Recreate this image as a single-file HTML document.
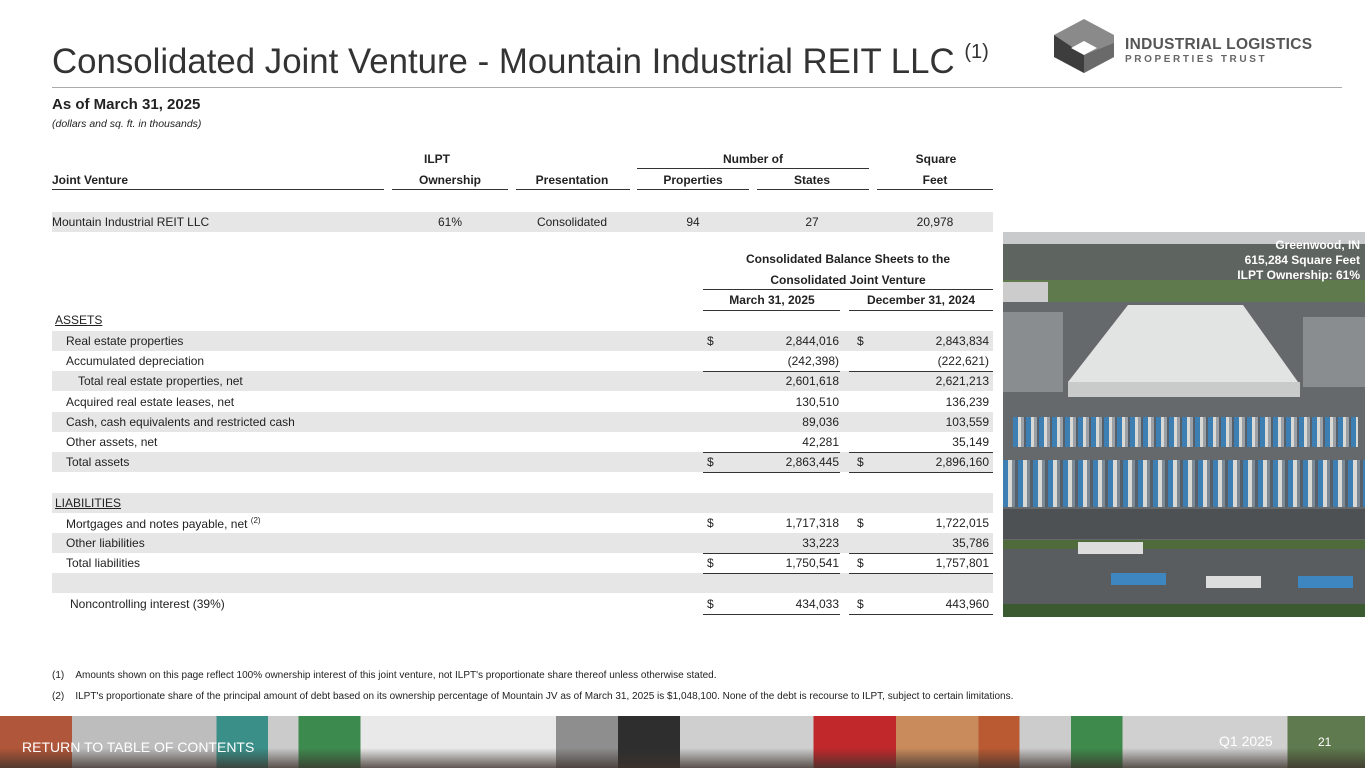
<!DOCTYPE html>
<html><head><meta charset="utf-8"><style>
*{margin:0;padding:0;box-sizing:border-box}
body{width:1365px;height:768px;overflow:hidden;background:#fff;font-family:"Liberation Sans",sans-serif;color:#222;position:relative}
.a{position:absolute;white-space:nowrap}
.t{font-size:12px}
.b{font-weight:bold}
.c{transform:translateX(-50%)}
.v1{position:absolute;right:526px;font-size:12px;text-align:right}
.v2{position:absolute;right:376px;font-size:12px;text-align:right}
.g{background:#e6e6e6;position:absolute;left:52px;width:941px;height:20px}
.ln{position:absolute;height:1px;background:#333}
</style></head><body>
<div class="a" style="left:52px;top:41px;font-size:34.8px;color:#333">Consolidated Joint Venture - Mountain Industrial REIT LLC <sup style="font-size:20px;vertical-align:15px">(1)</sup></div>
<div class="ln" style="left:52px;top:87px;width:1290px;background:#aaa"></div>
<svg class="a" style="left:1054px;top:19px" width="60" height="54" viewBox="0 0 60 54"><polygon points="30,0 60,16 60,38 30,54 0,38 0,16" fill="#8a8a8a"/><polygon points="0,16 0,38 30,54 30,36" fill="#3d3d3d"/><polygon points="30,36 30,54 60,38 60,24" fill="#6a6a6a"/><polygon points="30,22 43,29 30,36 17,29" fill="#fff"/></svg>
<div class="a b" style="left:1125px;top:36px;font-size:15.5px;color:#555;letter-spacing:.3px">INDUSTRIAL LOGISTICS</div>
<div class="a b" style="left:1125px;top:54px;font-size:10px;color:#666;letter-spacing:2.6px">PROPERTIES TRUST</div>
<div class="a b" style="left:52px;top:96px;font-size:15px">As of March 31, 2025</div>
<div class="a" style="left:52px;top:118px;font-size:10.5px;font-style:italic">(dollars and sq. ft. in thousands)</div>

<div class="a t b c" style="left:437px;top:152px">ILPT</div>
<div class="a t b c" style="left:753px;top:152px">Number of</div>
<div class="ln" style="left:637px;top:168px;width:232px"></div>
<div class="a t b c" style="left:936px;top:152px">Square</div>
<div class="a t b" style="left:52px;top:173px">Joint Venture</div>
<div class="a t b c" style="left:450px;top:173px">Ownership</div>
<div class="a t b c" style="left:572px;top:173px">Presentation</div>
<div class="a t b c" style="left:693px;top:173px">Properties</div>
<div class="a t b c" style="left:812px;top:173px">States</div>
<div class="a t b c" style="left:935px;top:173px">Feet</div>
<div class="ln" style="left:52px;top:189px;width:332px"></div>
<div class="ln" style="left:392px;top:189px;width:116px"></div>
<div class="ln" style="left:516px;top:189px;width:114px"></div>
<div class="ln" style="left:637px;top:189px;width:112px"></div>
<div class="ln" style="left:757px;top:189px;width:112px"></div>
<div class="ln" style="left:877px;top:189px;width:116px"></div>
<div class="g" style="top:212px"></div>
<div class="a t" style="left:52px;top:215px">Mountain Industrial REIT LLC</div>
<div class="a t c" style="left:450px;top:215px">61%</div>
<div class="a t c" style="left:572px;top:215px">Consolidated</div>
<div class="a t c" style="left:693px;top:215px">94</div>
<div class="a t c" style="left:812px;top:215px">27</div>
<div class="a t c" style="left:935px;top:215px">20,978</div>

<div class="a t b c" style="left:848px;top:252px">Consolidated Balance Sheets to the</div>
<div class="a t b c" style="left:848px;top:273px">Consolidated Joint Venture</div>
<div class="ln" style="left:703px;top:289px;width:290px"></div>
<div class="a t b c" style="left:772px;top:293px">March 31, 2025</div>
<div class="a t b c" style="left:921px;top:293px">December 31, 2024</div>
<div class="ln" style="left:703px;top:310px;width:137px"></div>
<div class="ln" style="left:849px;top:310px;width:144px"></div>

<div class="g" style="top:331px"></div><div class="g" style="top:371px"></div><div class="g" style="top:412px"></div><div class="g" style="top:452px"></div><div class="g" style="top:493px"></div><div class="g" style="top:533px"></div><div class="g" style="top:573px"></div>

<div class="a t" style="left:55px;top:313px;text-decoration:underline">ASSETS</div>
<div class="a t" style="left:66px;top:334px">Real estate properties</div>
<div class="a t" style="left:66px;top:354px">Accumulated depreciation</div>
<div class="a t" style="left:78px;top:374px">Total real estate properties, net</div>
<div class="a t" style="left:66px;top:395px">Acquired real estate leases, net</div>
<div class="a t" style="left:66px;top:415px">Cash, cash equivalents and restricted cash</div>
<div class="a t" style="left:66px;top:435px">Other assets, net</div>
<div class="a t" style="left:66px;top:455px">Total assets</div>
<div class="a t" style="left:55px;top:496px;text-decoration:underline">LIABILITIES</div>
<div class="a t" style="left:66px;top:516px">Mortgages and notes payable, net <sup style="font-size:8px">(2)</sup></div>
<div class="a t" style="left:66px;top:536px">Other liabilities</div>
<div class="a t" style="left:66px;top:556px">Total liabilities</div>
<div class="a t" style="left:70px;top:597px">Noncontrolling interest (39%)</div>

<div class="a t" style="left:707px;top:334px">$</div><div class="a t" style="left:857px;top:334px">$</div>
<div class="a t" style="left:707px;top:455px">$</div><div class="a t" style="left:857px;top:455px">$</div>
<div class="a t" style="left:707px;top:516px">$</div><div class="a t" style="left:857px;top:516px">$</div>
<div class="a t" style="left:707px;top:556px">$</div><div class="a t" style="left:857px;top:556px">$</div>
<div class="a t" style="left:707px;top:597px">$</div><div class="a t" style="left:857px;top:597px">$</div>

<div class="v1" style="top:334px">2,844,016</div><div class="v2" style="top:334px">2,843,834</div>
<div class="v1" style="top:354px">(242,398)</div><div class="v2" style="top:354px">(222,621)</div>
<div class="v1" style="top:374px">2,601,618</div><div class="v2" style="top:374px">2,621,213</div>
<div class="v1" style="top:395px">130,510</div><div class="v2" style="top:395px">136,239</div>
<div class="v1" style="top:415px">89,036</div><div class="v2" style="top:415px">103,559</div>
<div class="v1" style="top:435px">42,281</div><div class="v2" style="top:435px">35,149</div>
<div class="v1" style="top:455px">2,863,445</div><div class="v2" style="top:455px">2,896,160</div>
<div class="v1" style="top:516px">1,717,318</div><div class="v2" style="top:516px">1,722,015</div>
<div class="v1" style="top:536px">33,223</div><div class="v2" style="top:536px">35,786</div>
<div class="v1" style="top:556px">1,750,541</div><div class="v2" style="top:556px">1,757,801</div>
<div class="v1" style="top:597px">434,033</div><div class="v2" style="top:597px">443,960</div>

<div class="ln" style="left:703px;top:371px;width:137px"></div><div class="ln" style="left:849px;top:371px;width:144px"></div>
<div class="ln" style="left:703px;top:452px;width:137px"></div><div class="ln" style="left:849px;top:452px;width:144px"></div>
<div class="ln" style="left:703px;top:472px;width:137px"></div><div class="ln" style="left:849px;top:472px;width:144px"></div>
<div class="ln" style="left:703px;top:553px;width:137px"></div><div class="ln" style="left:849px;top:553px;width:144px"></div>
<div class="ln" style="left:703px;top:573px;width:137px"></div><div class="ln" style="left:849px;top:573px;width:144px"></div>
<div class="ln" style="left:703px;top:614px;width:137px"></div><div class="ln" style="left:849px;top:614px;width:144px"></div>

<div class="a" style="left:52px;top:670px;font-size:10px">(1)&nbsp;&nbsp;&nbsp;&nbsp;Amounts shown on this page reflect 100% ownership interest of this joint venture, not ILPT's proportionate share thereof unless otherwise stated.</div>
<div class="a" style="left:52px;top:691px;font-size:10px">(2)&nbsp;&nbsp;&nbsp;&nbsp;ILPT's proportionate share of the principal amount of debt based on its ownership percentage of Mountain JV as of March 31, 2025 is $1,048,100. None of the debt is recourse to ILPT, subject to certain limitations.</div>

<!-- photo -->
<div class="a" style="left:1003px;top:232px;width:362px;height:385px;overflow:hidden;background:#66696b">
 <div class="a" style="left:0;top:0;width:362px;height:12px;background:#c8cacb"></div>
 <div class="a" style="left:0;top:12px;width:362px;height:38px;background:#5e645f"></div>
 <div class="a" style="left:0;top:48px;width:362px;height:22px;background:#5f7a4c"></div>
 <div class="a" style="left:0;top:50px;width:45px;height:20px;background:#ccc"></div>
 <div class="a" style="left:0;top:80px;width:60px;height:80px;background:#8a8d8f"></div>
 <div class="a" style="left:300px;top:85px;width:62px;height:70px;background:#8a8d8f"></div>
 <svg class="a" style="left:0;top:0" width="362" height="385"><polygon points="125,73 240,73 295,150 65,150" fill="#e2e3e3"/><rect x="65" y="150" width="232" height="15" fill="#c9caca"/></svg>
 <div class="a" style="left:10px;top:185px;width:345px;height:30px;background:repeating-linear-gradient(90deg,#3d7fb3 0 5px,#d9d9d6 5px 8px,#9aa0a6 8px 11px,#55606a 11px 13px)"></div>
 <div class="a" style="left:0;top:228px;width:362px;height:47px;background:repeating-linear-gradient(90deg,#3d7fb3 0 5px,#d9d9d6 5px 9px,#7c8a96 9px 12px,#55606a 12px 15px)"></div>
 <div class="a" style="left:0;top:277px;width:362px;height:30px;background:#4e5153"></div>
 <div class="a" style="left:0;top:308px;width:362px;height:9px;background:#4f6b3b"></div>
 <div class="a" style="left:0;top:317px;width:362px;height:55px;background:#5a5d60"></div>
 <div class="a" style="left:75px;top:310px;width:65px;height:12px;background:#ddd"></div>
 <div class="a" style="left:108px;top:341px;width:55px;height:12px;background:#3d86bf"></div>
 <div class="a" style="left:203px;top:344px;width:55px;height:12px;background:#ddd"></div>
 <div class="a" style="left:295px;top:344px;width:55px;height:12px;background:#3d86bf"></div>
 <div class="a" style="left:0;top:372px;width:362px;height:13px;background:#3b5a2f"></div>
 <div class="a b" style="right:5px;top:6px;font-size:12px;color:#fff;line-height:15px;text-align:right">Greenwood, IN<br>615,284 Square Feet<br>ILPT Ownership: 61%</div>
</div>

<!-- footer -->
<div class="a" style="left:0;top:716px;width:1365px;height:52px;background:linear-gradient(90deg,#b0563a 0 35px,#bdbdbd 35px 105px,#3a8f88 105px 130px,#cbcbcb 130px 145px,#3d8a4f 145px 175px,#e9e9e9 175px 270px,#8e8e8e 270px 300px,#2e2e2e 300px 330px,#cfcfcf 330px 395px,#c0282c 395px 435px,#c98a5c 435px 475px,#ba5a33 475px 495px,#cccccc 495px 520px,#3e8a4c 520px 545px,#d0d0d0 545px 625px,#5e7a4e 625px 680px,#a8a8a8 680px 1365px);transform-origin:0 0;transform:scaleX(2.06)"></div>
<div class="a" style="left:0;top:748px;width:1365px;height:20px;background:linear-gradient(180deg,rgba(60,50,44,0) 0,rgba(60,50,44,.8) 100%)"></div>
<div class="a" style="left:22px;top:739px;font-size:14px;color:#fff">RETURN TO TABLE OF CONTENTS</div>
<div class="a" style="left:1219px;top:733px;font-size:14px;color:#fff">Q1 2025</div>
<div class="a" style="left:1318px;top:735px;font-size:12px;color:#fff">21</div>
</body></html>
